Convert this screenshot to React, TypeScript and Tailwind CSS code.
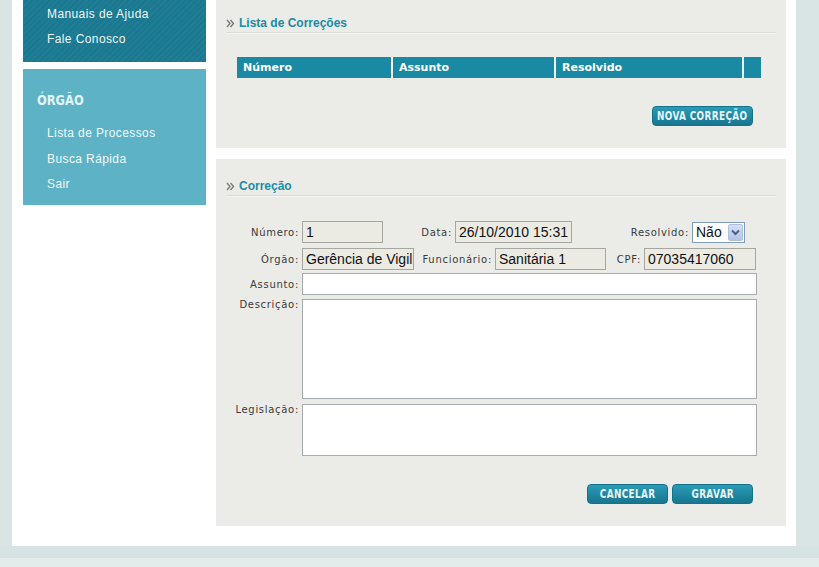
const SIDE_TOP = ["Manuais de Ajuda", "Fale Conosco"];
const SIDE_ORGAO = ["Lista de Processos", "Busca Rápida", "Sair"];

const label = "text-[10px] tracking-[0.7px] text-[#3a3a3a] font-['DejaVu_Sans',sans-serif] whitespace-nowrap";
const inputBase =
  "h-[22px] px-[3px] border border-[#a7a7a2] text-[14px] leading-[20px] text-[#111] font-['Liberation_Sans',Arial,sans-serif] overflow-hidden whitespace-nowrap";
const readonly = inputBase + " bg-[#ebebe4]";
const editable = "border border-[#a5acb2] bg-white";

function Arrow() {
  return (
    <svg width="9" height="9" viewBox="0 0 9 9" className="shrink-0">
      <polyline points="1,1 4,4.5 1,8" fill="none" stroke="#7a7a7a" strokeWidth="1.4" />
      <polyline points="4.5,1 7.5,4.5 4.5,8" fill="none" stroke="#7a7a7a" strokeWidth="1.4" />
    </svg>
  );
}

function SectionTitle({ title }: { title: string }) {
  return (
    <div className="border-b border-[#d9dcd6] shadow-[0_1px_0_#f7f8f5]">
      <div className="flex items-center gap-[4px] h-[18px]">
        <Arrow />
        <span className="text-[12px] font-bold text-[#1b8ba7] font-['Liberation_Sans',Arial,sans-serif]">
          {title}
        </span>
      </div>
    </div>
  );
}

function Btn({ text, w }: { text: string; w: string }) {
  return (
    <div
      className={`${w} h-[20px] flex items-center justify-center rounded-[4px] border border-[#15718a] bg-gradient-to-b from-[#2a9bb7] to-[#17768f]`}
    >
      <span className="inline-block scale-x-[0.74] whitespace-nowrap text-[12px] font-bold tracking-[0.5px] text-[#e8f5f8] font-['DejaVu_Sans',sans-serif]">
        {text}
      </span>
    </div>
  );
}

export default function App() {
  return (
    <div className="w-[819px] h-[567px] overflow-hidden bg-[#d9e5e5] flex flex-col">
      <div className="ml-3 w-[784px] bg-white flex pl-[11px] pr-[10px] pb-[20px]">
        {/* sidebar */}
        <div className="w-[183px] flex flex-col gap-[7px] font-['Liberation_Sans',Arial,sans-serif]">
          <div className="h-[62px] pt-[2px] bg-[repeating-linear-gradient(135deg,#1f7e95_0px,#1f7e95_2px,#1b788f_2px,#1b788f_4px)]">
            {SIDE_TOP.map(s => (
              <div key={s} className="h-[25px] leading-[25px] pl-6 text-[12px] tracking-[0.4px] text-[#eef7f9]">
                {s}
              </div>
            ))}
          </div>
          <div className="h-[136px] bg-[#5db2c5] pt-[21px]">
            <div className="h-[20px] leading-[20px] pl-[14px] text-[14px] font-bold text-[#e2f5f9] font-['DejaVu_Sans',sans-serif]">
              <span className="inline-block origin-left scale-x-[0.82]">ÓRGÃO</span>
            </div>
            <div className="mt-[11px]">
              {SIDE_ORGAO.map(s => (
                <div key={s} className="h-[25.5px] leading-[25px] pl-6 text-[12px] tracking-[0.4px] text-[#f1fafc]">
                  {s}
                </div>
              ))}
            </div>
          </div>
        </div>

        {/* main */}
        <div className="ml-[10px] w-[570px] flex flex-col gap-[11px]">
          <div className="h-[148px] bg-[#ebece8] px-[10px] pt-[14px]">
            <SectionTitle title="Lista de Correções" />
            <div className="ml-[11px] mt-[24px] w-[524px] h-[21px] flex gap-[2px] bg-[#f3f4f1] text-[11px] font-bold text-white font-['DejaVu_Sans',sans-serif]">
              <div className="w-[154px] bg-[#1a89a3] pl-[6px] leading-[22px]">Número</div>
              <div className="w-[161px] bg-[#1a89a3] pl-[6px] leading-[22px]">Assunto</div>
              <div className="w-[186px] bg-[#1a89a3] pl-[6px] leading-[22px]">Resolvido</div>
              <div className="w-[17px] bg-[#1a89a3]" />
            </div>
            <div className="flex justify-end mr-[23px] mt-[28px]">
              <Btn text="NOVA CORREÇÃO" w="w-[101px]" />
            </div>
          </div>

          <div className="h-[367px] bg-[#ebece8] px-[10px] pt-[18px]">
            <SectionTitle title="Correção" />

            <div className="mt-[25px] flex flex-col">
              {/* row 1 */}
              <div className="flex items-center h-[22px]">
                <div className={`w-[73px] text-right ${label}`}>Número:</div>
                <div className={`ml-[3px] w-[81px] ${readonly}`}>1</div>
                <div className={`w-[69px] text-right ${label}`}>Data:</div>
                <div className={`ml-[3px] w-[117px] ${readonly}`}>26/10/2010 15:31</div>
                <div className={`w-[117px] text-right ${label}`}>Resolvido:</div>
                <div className="ml-[3px] w-[53px] h-[21px] flex items-center border border-[#7f9db9] bg-white">
                  <span className="flex-1 pl-[3px] text-[14px] leading-[19px] font-['Liberation_Sans',Arial,sans-serif] text-[#111]">Não</span>
                  <div className="w-[15px] h-[17px] mr-[1px] flex items-center justify-center rounded-[2px] bg-gradient-to-b from-[#d6dff5] to-[#b5c3e3] border border-[#b1bfdc]">
                    <svg width="9" height="7" viewBox="0 0 9 7">
                      <polyline points="1,1.5 4.5,5 8,1.5" fill="none" stroke="#4d6185" strokeWidth="2" />
                    </svg>
                  </div>
                </div>
              </div>

              {/* row 2 */}
              <div className="flex items-center h-[22px] mt-[5px]">
                <div className={`w-[73px] text-right ${label}`}>Órgão:</div>
                <div className={`ml-[3px] w-[112px] ${readonly}`}>Gerência de Vigil</div>
                <div className={`w-[78px] text-right ${label}`}>Funcionário:</div>
                <div className={`ml-[3px] w-[111px] ${readonly}`}>Sanitária 1</div>
                <div className={`w-[35px] text-right ${label}`}>CPF:</div>
                <div className={`ml-[3px] w-[112px] ${readonly}`}>07035417060</div>
              </div>

              {/* assunto */}
              <div className="flex items-center h-[22px] mt-[3px]">
                <div className={`w-[73px] text-right ${label}`}>Assunto:</div>
                <div className={`ml-[3px] w-[455px] h-[22px] ${editable}`} />
              </div>

              {/* descricao */}
              <div className="flex items-start mt-[4px]">
                <div className={`w-[73px] text-right ${label} leading-[12px]`}>Descrição:</div>
                <div className={`ml-[3px] w-[455px] h-[100px] ${editable}`} />
              </div>

              {/* legislacao */}
              <div className="flex items-start mt-[5px]">
                <div className={`w-[73px] text-right ${label} leading-[12px]`}>Legislação:</div>
                <div className={`ml-[3px] w-[455px] h-[52px] ${editable}`} />
              </div>

              <div className="flex justify-end gap-[4px] mr-[23px] mt-[28px]">
                <Btn text="CANCELAR" w="w-[81px]" />
                <Btn text="GRAVAR" w="w-[81px]" />
              </div>
            </div>
          </div>
        </div>
      </div>
      <div className="h-[12px] bg-[#d6e3e3]" />
      <div className="flex-1 bg-[#e3ebeb]" />
    </div>
  );
}
